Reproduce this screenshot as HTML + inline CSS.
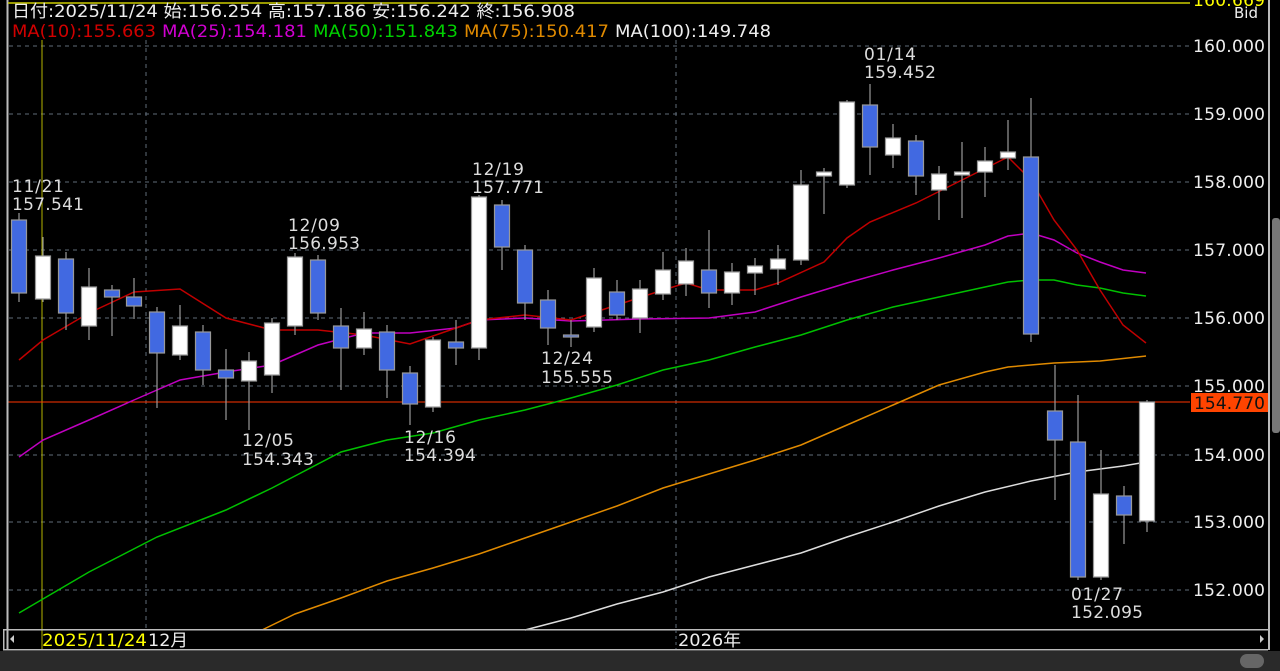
<!DOCTYPE html>
<html><head><meta charset="utf-8"><style>
html,body{margin:0;padding:0;background:#000;width:1280px;height:671px;overflow:hidden}
svg{display:block}
text{font-family:"DejaVu Sans","Noto Sans CJK JP",sans-serif}
</style></head><body>
<svg width="1280" height="671" viewBox="0 0 1280 671" xmlns="http://www.w3.org/2000/svg">
<rect width="1280" height="671" fill="#000"/>
<g stroke="#5f6b78" stroke-width="1" stroke-dasharray="4,4">
<line x1="9" y1="46" x2="1190" y2="46"/><line x1="9" y1="114" x2="1190" y2="114"/>
<line x1="9" y1="182" x2="1190" y2="182"/><line x1="9" y1="250" x2="1190" y2="250"/>
<line x1="9" y1="318" x2="1190" y2="318"/><line x1="9" y1="386" x2="1190" y2="386"/>
<line x1="9" y1="455" x2="1190" y2="455"/><line x1="9" y1="522" x2="1190" y2="522"/>
<line x1="9" y1="590" x2="1190" y2="590"/>
<line x1="146" y1="40" x2="146" y2="629"/><line x1="676" y1="40" x2="676" y2="629"/>
</g>
<line x1="42" y1="40" x2="42" y2="650" stroke="#b5b500" stroke-width="1"/>
<line x1="8" y1="402" x2="1190" y2="402" stroke="#ff3300" stroke-width="1"/>
<line x1="7.5" y1="0" x2="7.5" y2="650" stroke="#bbb" stroke-width="2"/>
<line x1="1269" y1="0" x2="1269" y2="650" stroke="#bbb" stroke-width="2"/>
<line x1="8" y1="3" x2="1190" y2="3" stroke="#cccc00" stroke-width="1.5"/>
<g fill="none" stroke-width="1.5">
<polyline stroke="#ddd" points="525,630 571,618 617,604 663,592 709,577 755,565 801,553 847,537 893,522 939,506 985,492 1031,481 1077,472 1123,466 1146,462"/>
<polyline stroke="#e08a00" points="262,630 295,614 341,598 387,581 433,568 479,554 525,538 571,522 617,506 663,488 709,474 755,460 801,445 847,425 893,405 939,385 985,372 1008,367 1054,363 1100,361 1146,356"/>
<polyline stroke="#00c000" points="19,613 89,572 157,537 226,510 272,488 341,452 387,440 433,433 479,420 525,410 571,398 617,385 663,370 709,360 755,347 801,335 847,320 893,307 939,297 985,287 1008,282 1031,280 1054,280 1077,285 1100,288 1123,293 1146,296"/>
<polyline stroke="#c000c0" points="19,457 43,440 89,420 134,400 180,380 226,372 272,365 318,345 364,333 410,333 456,328 479,320 525,318 571,321 640,319 709,318 755,312 801,297 847,283 893,270 939,258 985,245 1008,236 1031,233 1054,240 1077,253 1100,262 1123,270 1146,273"/>
<polyline stroke="#c00000" points="19,360 43,340 89,313 134,292 180,289 226,318 272,330 318,330 364,335 410,344 456,328 479,320 525,315 571,320 617,305 663,290 686,283 709,290 755,290 778,283 824,262 847,238 870,222 916,203 962,180 1008,157 1031,180 1054,220 1077,250 1100,290 1123,325 1146,343"/>
</g>
<g stroke="#999" stroke-width="1.2">
<g>
<line x1="19" y1="213" x2="19" y2="302"/><line x1="43" y1="237" x2="43" y2="302"/><line x1="66" y1="252" x2="66" y2="330"/><line x1="89" y1="268" x2="89" y2="340"/>
<line x1="112" y1="285" x2="112" y2="336"/><line x1="134" y1="278" x2="134" y2="319"/><line x1="157" y1="307" x2="157" y2="408"/><line x1="180" y1="305" x2="180" y2="360"/>
<line x1="203" y1="325" x2="203" y2="385"/><line x1="226" y1="349" x2="226" y2="420"/><line x1="249" y1="352" x2="249" y2="430"/><line x1="272" y1="318" x2="272" y2="393"/>
<line x1="295" y1="253" x2="295" y2="335"/><line x1="318" y1="255" x2="318" y2="320"/><line x1="341" y1="308" x2="341" y2="390"/><line x1="364" y1="312" x2="364" y2="355"/>
<line x1="387" y1="325" x2="387" y2="398"/><line x1="410" y1="366" x2="410" y2="425"/><line x1="433" y1="337" x2="433" y2="412"/><line x1="456" y1="320" x2="456" y2="365"/>
<line x1="479" y1="195" x2="479" y2="360"/><line x1="502" y1="200" x2="502" y2="270"/><line x1="525" y1="245" x2="525" y2="320"/><line x1="548" y1="290" x2="548" y2="345"/>
<line x1="571" y1="320" x2="571" y2="347"/><line x1="594" y1="268" x2="594" y2="332"/><line x1="617" y1="280" x2="617" y2="320"/><line x1="640" y1="280" x2="640" y2="333"/>
<line x1="663" y1="252" x2="663" y2="300"/><line x1="686" y1="248" x2="686" y2="296"/><line x1="709" y1="230" x2="709" y2="308"/><line x1="732" y1="263" x2="732" y2="305"/>
<line x1="755" y1="258" x2="755" y2="295"/><line x1="778" y1="245" x2="778" y2="285"/><line x1="801" y1="170" x2="801" y2="265"/><line x1="824" y1="168" x2="824" y2="214"/>
<line x1="847" y1="100" x2="847" y2="188"/><line x1="870" y1="84" x2="870" y2="175"/><line x1="893" y1="124" x2="893" y2="168"/><line x1="916" y1="135" x2="916" y2="195"/>
<line x1="939" y1="166" x2="939" y2="220"/><line x1="962" y1="142" x2="962" y2="218"/><line x1="985" y1="147" x2="985" y2="197"/><line x1="1008" y1="120" x2="1008" y2="170"/>
<line x1="1031" y1="98" x2="1031" y2="342"/><line x1="1055" y1="365" x2="1055" y2="500"/><line x1="1078" y1="395" x2="1078" y2="580"/><line x1="1101" y1="450" x2="1101" y2="580"/>
<line x1="1124" y1="486" x2="1124" y2="544"/><line x1="1147" y1="400" x2="1147" y2="532"/>
</g>
<g fill="#4169e1">
<rect x="11.5" y="220" width="15" height="73"/><rect x="58.5" y="259" width="15" height="54"/><rect x="104.5" y="290" width="15" height="7"/><rect x="126.5" y="297" width="15" height="9"/>
<rect x="149.5" y="312" width="15" height="41"/><rect x="195.5" y="332" width="15" height="38"/><rect x="218.5" y="370" width="15" height="8"/><rect x="310.5" y="260" width="15" height="53"/>
<rect x="333.5" y="326" width="15" height="22"/><rect x="379.5" y="332" width="15" height="38"/><rect x="402.5" y="373" width="15" height="31"/><rect x="448.5" y="342" width="15" height="6"/>
<rect x="494.5" y="205" width="15" height="42"/><rect x="517.5" y="250" width="15" height="53"/><rect x="540.5" y="300" width="15" height="28"/><rect x="563.5" y="335" width="15" height="2"/>
<rect x="609.5" y="292" width="15" height="23"/><rect x="701.5" y="270" width="15" height="23"/><rect x="862.5" y="105" width="15" height="42"/><rect x="908.5" y="141" width="15" height="35"/>
<rect x="1023.5" y="157" width="15" height="177"/><rect x="1047.5" y="411" width="15" height="29"/><rect x="1070.5" y="442" width="15" height="135"/><rect x="1116.5" y="496" width="15" height="19"/>
</g>
<g fill="#fff">
<rect x="35.5" y="256" width="15" height="43"/><rect x="81.5" y="287" width="15" height="39"/><rect x="172.5" y="326" width="15" height="29"/><rect x="241.5" y="361" width="15" height="20"/>
<rect x="264.5" y="323" width="15" height="52"/><rect x="287.5" y="257" width="15" height="69"/><rect x="356.5" y="329" width="15" height="19"/><rect x="425.5" y="340" width="15" height="67"/>
<rect x="471.5" y="197" width="15" height="151"/><rect x="586.5" y="278" width="15" height="49"/><rect x="632.5" y="289" width="15" height="29"/><rect x="655.5" y="270" width="15" height="24"/>
<rect x="678.5" y="261" width="15" height="23"/><rect x="724.5" y="272" width="15" height="21"/><rect x="747.5" y="266" width="15" height="7"/><rect x="770.5" y="259" width="15" height="10"/>
<rect x="793.5" y="185" width="15" height="75"/><rect x="816.5" y="172" width="15" height="4"/><rect x="839.5" y="102" width="15" height="83"/><rect x="885.5" y="138" width="15" height="17"/>
<rect x="931.5" y="174" width="15" height="16"/><rect x="954.5" y="172" width="15" height="3"/><rect x="977.5" y="161" width="15" height="11"/><rect x="1000.5" y="152" width="15" height="6"/>
<rect x="1093.5" y="494" width="15" height="83"/><rect x="1139.5" y="402" width="15" height="119"/>
</g>
</g>
<g fill="#ddd" font-size="17">
<text x="12" y="192" textLength="52">11/21</text><text x="12" y="210" textLength="72">157.541</text>
<text x="288" y="231" textLength="52">12/09</text><text x="288" y="249" textLength="72">156.953</text>
<text x="242" y="446" textLength="52">12/05</text><text x="242" y="465" textLength="72">154.343</text>
<text x="404" y="443" textLength="52">12/16</text><text x="404" y="461" textLength="72">154.394</text>
<text x="472" y="175" textLength="52">12/19</text><text x="472" y="193" textLength="72">157.771</text>
<text x="541" y="364" textLength="52">12/24</text><text x="541" y="383" textLength="72">155.555</text>
<text x="864" y="60" textLength="52">01/14</text><text x="864" y="78" textLength="72">159.452</text>
<text x="1071" y="600" textLength="52">01/27</text><text x="1071" y="618" textLength="72">152.095</text>
</g>
<text x="12" y="17" fill="#eee" font-size="17" textLength="563" lengthAdjust="spacingAndGlyphs">日付:2025/11/24 始:156.254 高:157.186 安:156.242 終:156.908</text>
<g font-size="17">
<text x="12" y="37" fill="#d00000" textLength="144" lengthAdjust="spacingAndGlyphs">MA(10):155.663</text>
<text x="162" y="37" fill="#d000d0" textLength="145" lengthAdjust="spacingAndGlyphs">MA(25):154.181</text>
<text x="313" y="37" fill="#00d000" textLength="145" lengthAdjust="spacingAndGlyphs">MA(50):151.843</text>
<text x="464" y="37" fill="#e08a00" textLength="145" lengthAdjust="spacingAndGlyphs">MA(75):150.417</text>
<text x="615" y="37" fill="#eee" textLength="156" lengthAdjust="spacingAndGlyphs">MA(100):149.748</text>
</g>
<g fill="#eee" font-size="17">
<text x="1193" y="52" textLength="72">160.000</text><text x="1193" y="120" textLength="72">159.000</text><text x="1193" y="188" textLength="72">158.000</text>
<text x="1193" y="256" textLength="72">157.000</text><text x="1193" y="324" textLength="72">156.000</text><text x="1193" y="392" textLength="72">155.000</text>
<text x="1193" y="461" textLength="72">154.000</text><text x="1193" y="528" textLength="72">153.000</text><text x="1193" y="596" textLength="72">152.000</text>
<text x="1234" y="18" font-size="15">Bid</text>
</g>
<text x="1193" y="6" fill="#ffff00" font-size="17" textLength="72">160.669</text>
<rect x="1191" y="393" width="77" height="19" fill="#ff4400"/>
<text x="1194" y="409" fill="#111" font-size="17" textLength="71">154.770</text>
<rect x="1272" y="218" width="8" height="215" rx="3" fill="#777"/>
<rect x="3" y="629" width="1265" height="1.5" fill="#bbb"/>
<rect x="3" y="649" width="1265" height="1.5" fill="#bbb"/>
<rect x="3" y="630" width="1.5" height="20" fill="#bbb"/>
<line x1="676" y1="630" x2="676" y2="649" stroke="#5f6b78" stroke-dasharray="3,3"/>
<text x="42" y="646" fill="#ffff00" font-size="17" textLength="105" lengthAdjust="spacingAndGlyphs">2025/11/24</text>
<text x="148" y="646" fill="#eee" font-size="17" textLength="40" lengthAdjust="spacingAndGlyphs">12月</text>
<text x="678" y="646" fill="#eee" font-size="17" textLength="63" lengthAdjust="spacingAndGlyphs">2026年</text>
<polygon points="10,639 14,635 14,643" fill="#ccc"/>
<polygon points="1260,635 1264,639 1260,643" fill="#ccc"/>
<rect x="0" y="651" width="1280" height="20" fill="#2a2a2a"/>
<rect x="1240" y="654" width="24" height="14" rx="7" fill="#666"/>
</svg>
</body></html>
